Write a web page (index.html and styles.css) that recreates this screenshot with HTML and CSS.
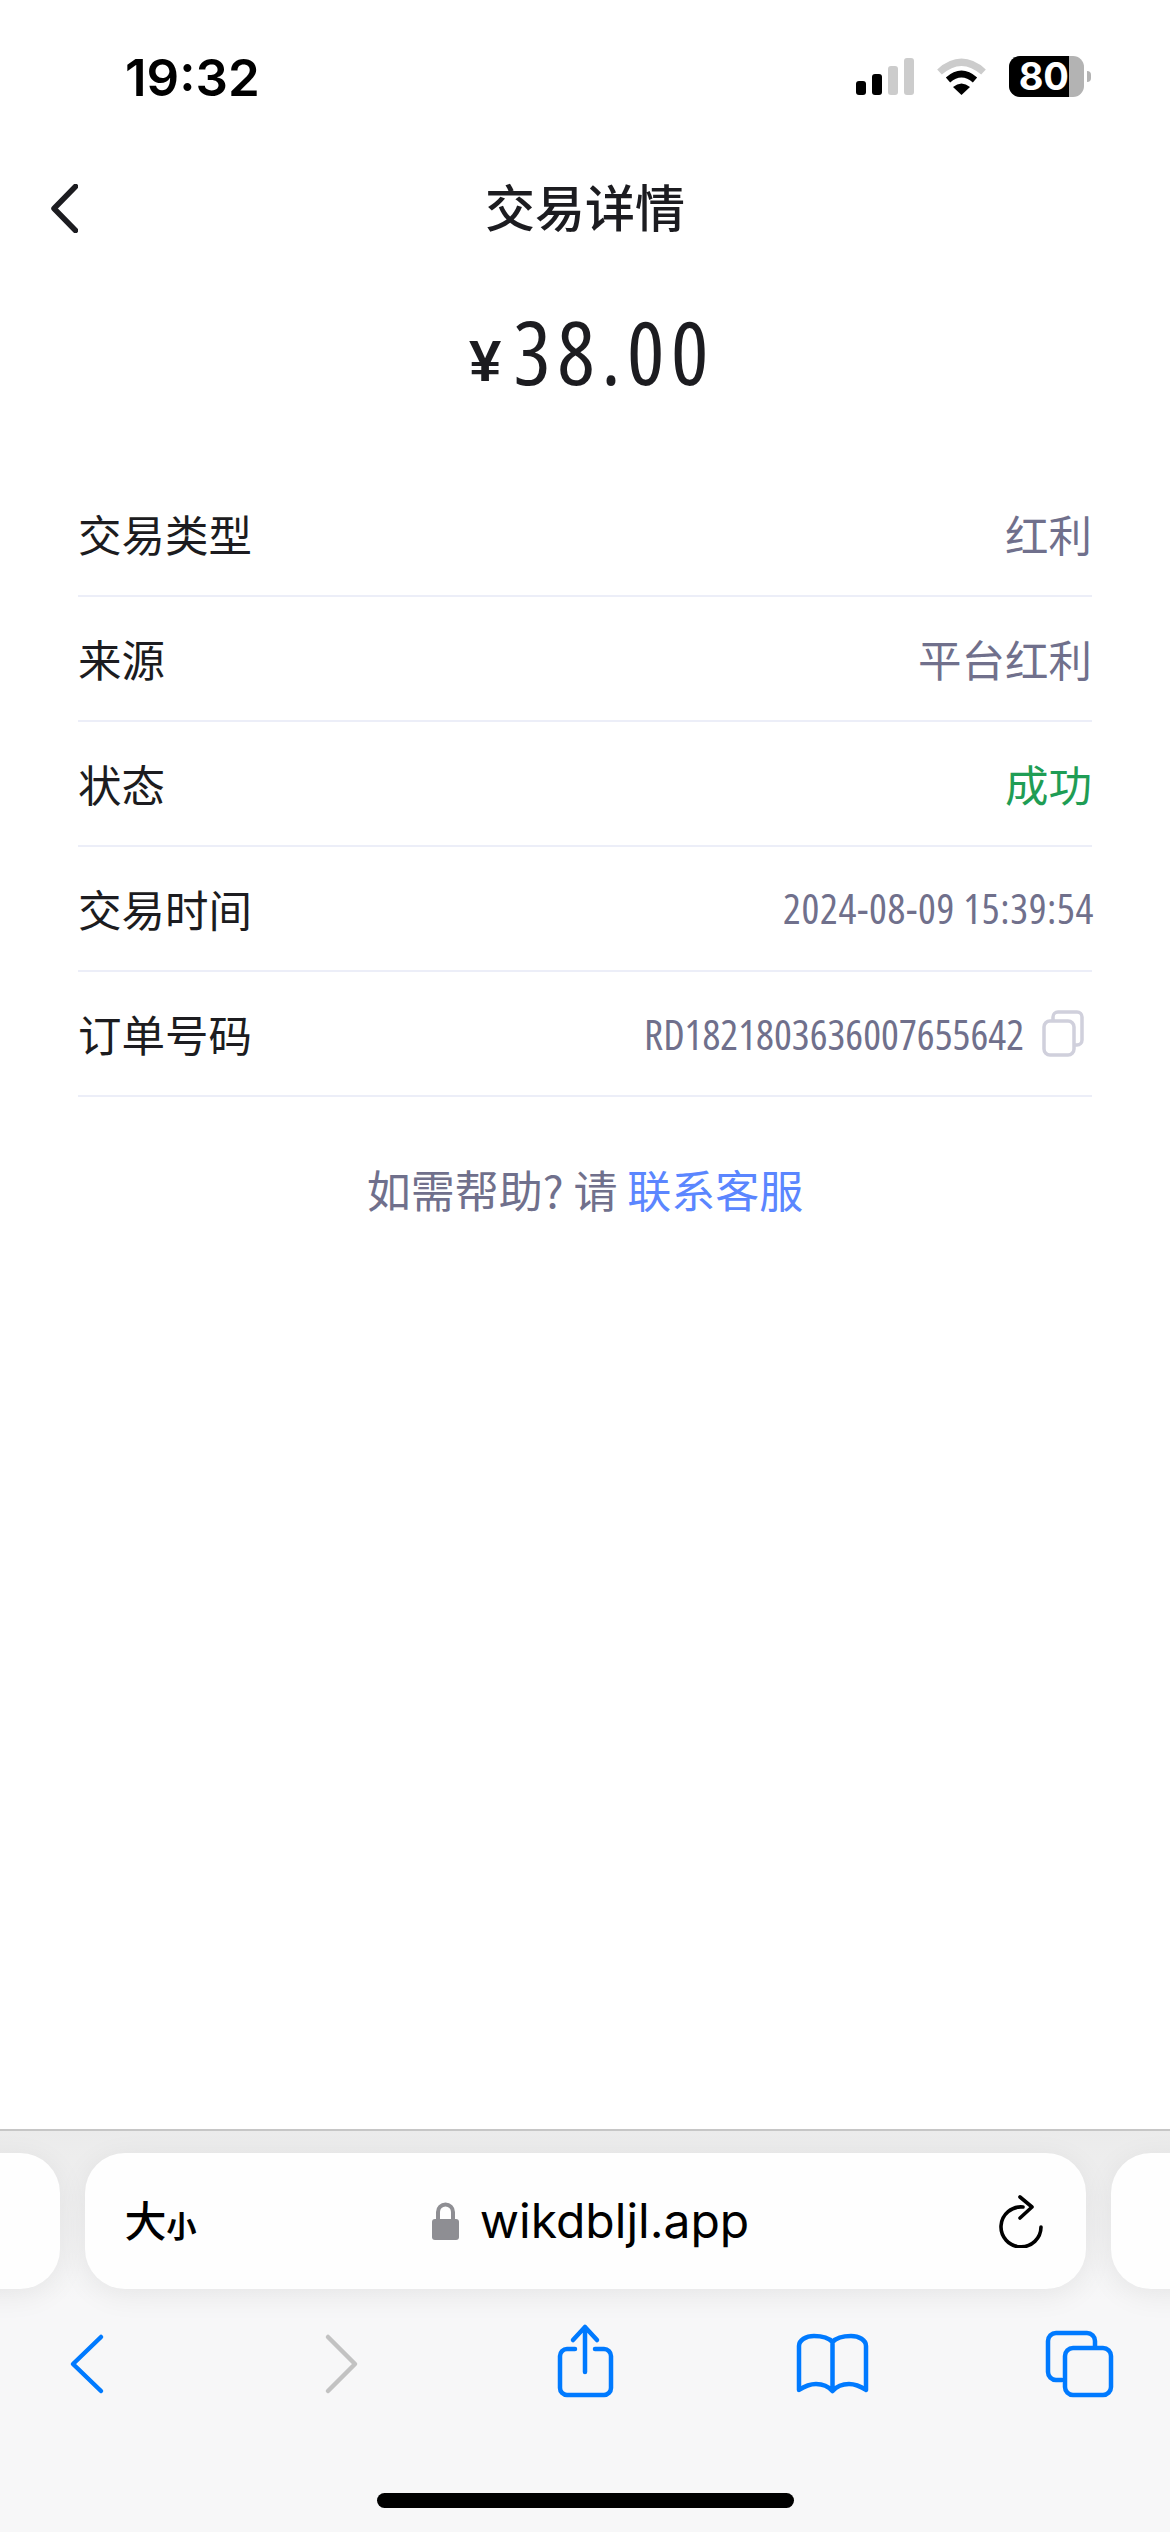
FILE: index.html
```html
<!doctype html>
<html>
<head>
<meta charset="UTF-8">
<title>交易详情</title>
<link rel="stylesheet" href="styles.css">
</head>
<body>
<div class="page">
	<div class="status">
		<span class="clock">19:32</span>
		<div class="status_icons">
			<div class="signal">
				<i class="s1"></i><i class="s2"></i><i class="s3"></i><i class="s4"></i>
			</div>
			<svg class="wifi" width="51" height="37" viewBox="0 0 51 37">
				<path d="M3.5 14 Q25.5 -5.5 47.5 14" fill="none" stroke="#ccc" stroke-width="7"/>
				<path d="M12 22 Q25.5 10 39 22" fill="none" stroke="#000" stroke-width="6.5"/>
				<path d="M17 29 Q25.5 22 34 29 L25.5 37 Z" fill="#000"/>
			</svg>
			<div class="battery"><div class="battery_level">80</div></div>
			<div class="battery_nub"></div>
		</div>
	</div>

	<div class="nav">
		<svg class="nav_back" width="27" height="49" viewBox="0 0 27 49">
			<path d="M24.5 2.5 L3 24.5 L24.5 46.5" fill="none" stroke="#1c1c20" stroke-width="5.5" stroke-linecap="round" stroke-linejoin="round"/>
		</svg>
		<h1>交易详情</h1>
	</div>

	<div class="amount"><span class="yen">¥</span><span class="money">38.00</span></div>

	<div class="list">
		<div class="row"><span>交易类型</span><span class="val">红利</span></div>
		<div class="row"><span>来源</span><span class="val">平台红利</span></div>
		<div class="row"><span>状态</span><span class="val ok">成功</span></div>
		<div class="row"><span>交易时间</span><span class="val num time">2024-08-09 15:39:54</span></div>
		<div class="row">
			<span>订单号码</span>
			<div class="order">
				<span class="val num">RD1821803636007655642</span>
				<svg width="42" height="47" viewBox="0 0 42 47">
					<path d="M11 10 V7 a5 5 0 0 1 5-5 H35 a5 5 0 0 1 5 5 V30 a5 5 0 0 1-5 5 H32" fill="none" stroke="#d0d0dc" stroke-width="3.5"/>
					<rect x="2" y="11" width="30" height="34" rx="6" fill="#fff" stroke="#d0d0dc" stroke-width="3.5"/>
				</svg>
			</div>
		</div>
	</div>

	<div class="help">如需帮助? 请 <a>联系客服</a></div>

	<div class="spacer"></div>

	<div class="safari">
		<div class="pills">
			<div class="pill"></div>
			<div class="pill url">
				<div class="aa">大<small>小</small></div>
				<div class="addr">
					<svg width="27" height="38" viewBox="0 0 27 38">
						<path d="M6 18 V10 a7.5 7.5 0 0 1 15 0 V18" fill="none" stroke="#8e8e93" stroke-width="4"/>
						<rect x="0" y="17" width="27" height="21" rx="3" fill="#8e8e93"/>
					</svg>
					<span>wikdbljl.app</span>
				</div>
				<svg width="45" height="53" viewBox="0 0 45 53">
					<path d="M24 12 A20 20 0 1 0 42 32" fill="none" stroke="#000" stroke-width="3.6" stroke-linecap="round"/>
					<path d="M21 2 L33 12 L21 23" fill="none" stroke="#000" stroke-width="3.6" stroke-linecap="round" stroke-linejoin="round"/>
				</svg>
			</div>
			<div class="pill"></div>
		</div>
		<div class="tools">
			<svg viewBox="0 0 80 80"><path d="M55 15 L27 42 L55 69"/></svg>
			<svg viewBox="0 0 80 80" class="off"><path d="M34 15 L61 42 L34 69"/></svg>
			<svg viewBox="0 0 80 80">
				<path d="M33 27 H25 a7 7 0 0 0 -7 7 V66 a7 7 0 0 0 7 7 H62 a7 7 0 0 0 7-7 V34 a7 7 0 0 0-7-7 H53"/>
				<path d="M43 50 V5 M31 18 L43 5 L55 18"/>
			</svg>
			<svg viewBox="0 0 80 80">
				<path d="M42.5 20 C38 15 30 14 24 14 C16 14 9 18 9 24 V68 C15 64 20 62 26 62 C33 62 38 64 42.5 69 C47 64 52 62 59 62 C65 62 70 64 76 68 V24 C76 18 69 14 61 14 C55 14 47 15 42.5 20 Z M42.5 20 V69"/>
			</svg>
			<svg viewBox="0 0 80 80">
				<path d="M57 24 V19 a8 8 0 0 0-8-8 H18 a8 8 0 0 0-8 8 V50 a8 8 0 0 0 8 8 H24"/>
				<rect x="27" y="26" width="46" height="47" rx="8"/>
			</svg>
		</div>
		<div class="home"></div>
	</div>
</div>
</body>
</html>
```

FILE: styles.css
```css
*{box-sizing:border-box}
body{
	margin:0;
	background:#fff;
	color:#1c1c20;
	font-family:"Noto Sans CJK SC","Liberation Sans",sans-serif;
}
.page{
	width:1170px;height:2532px;
	display:flex;flex-direction:column;
	overflow:hidden;
}

/* status bar */
.status{
	height:150px;
	padding:56px 79px 0 125px;
	display:flex;justify-content:space-between;align-items:flex-start;
}
.clock{
	font:600 51px/44px Inter,sans-serif;
	color:#000;
}
.status_icons{display:flex;align-items:center;height:41px}
.signal{display:flex;align-items:flex-end;gap:6px;height:37px;margin-right:22px}
.signal i{display:block;width:10px;border-radius:3px;background:#ccc}
.signal .s1{height:14px;background:#000}
.signal .s2{height:21px;background:#000}
.signal .s3{height:29px}
.signal .s4{height:37px}
.wifi{margin-right:22px}
.battery{
	width:75px;height:41px;
	border-radius:11px;
	background:#b3b3b3;
}
.battery_level{
	width:60px;height:41px;
	border-radius:11px 0 0 11px;
	background:#000;color:#fff;
	font:700 38px/41px Inter,sans-serif;
	text-align:right;
}
.battery_nub{
	width:4px;height:11px;margin-left:3px;
	border-radius:0 4px 4px 0;
	background:#b3b3b3;
}

/* title */
.nav{
	height:116px;
	display:flex;align-items:center;justify-content:center;
	position:relative;
}
.nav_back{position:absolute;left:51px;top:34px}
.nav h1{margin:-6px 0 0;font-size:50px;font-weight:500;line-height:60px}

.amount{
	height:206px;
	padding:0 0 36px 14px;
	display:flex;align-items:center;justify-content:center;
}
.yen{font:700 58px/1 "Liberation Sans",sans-serif;margin:20px 12px 0 0}
.money{
	font:500 88px/1 "Open Sans","Liberation Sans",sans-serif;
	font-stretch:75%;
	letter-spacing:6.5px;
}

/* detail rows */
.list{padding:0 78px}
.row{
	height:125px;
	display:flex;justify-content:space-between;align-items:center;
	border-bottom:2px solid #eceef8;
	font-size:43.5px;
}
.val{color:#70708c}
.ok{color:#1f9d55}
.num{font:400 42px/1 "Open Sans","Liberation Sans",sans-serif;font-stretch:75%}
.time{letter-spacing:.6px;margin:0 -2px 2px 0}
.order{display:flex;align-items:center;gap:18px;padding-right:8px}

.help{
	margin-top:62px;
	text-align:center;
	font-size:44px;line-height:60px;
	color:#70708c;
}
.help a{color:#5b86ff}
.spacer{flex:1}

/* browser bar */
.safari{
	height:403px;
	border-top:2px solid #c6c6c6;
	background:linear-gradient(#ebebeb,#f7f7f8 170px);
	display:flex;flex-direction:column;
	position:relative;
}
.pills{
	margin-top:22px;
	display:flex;justify-content:center;gap:25px;
}
.pill{
	flex:0 0 1001px;height:136px;
	border-radius:40px;
	background:#fefefe;
	box-shadow:0 6px 30px rgba(0,0,0,.07);
}
.url{
	display:flex;align-items:center;
	padding:0 42px 0 40px;
	color:#000;
}
.aa{font-size:42px;font-weight:500;line-height:50px;width:72px;white-space:nowrap}
.aa small{font-size:30px;font-weight:700}
.addr{
	flex:1;
	display:flex;align-items:center;justify-content:center;gap:21px;
	padding-right:14px;
	font:400 48px/60px Inter,sans-serif;
}
.tools{
	margin-top:33px;
	padding-left:46px;
	display:flex;gap:168px;
}
.tools svg{
	width:80px;height:80px;
	fill:none;stroke:#007aff;stroke-width:4.5;
	stroke-linecap:round;stroke-linejoin:round;
}
.tools .off{stroke:#c2c2c2}
.home{
	position:absolute;left:377px;bottom:24px;
	width:417px;height:15px;
	border-radius:8px;
	background:#000;
}
```
